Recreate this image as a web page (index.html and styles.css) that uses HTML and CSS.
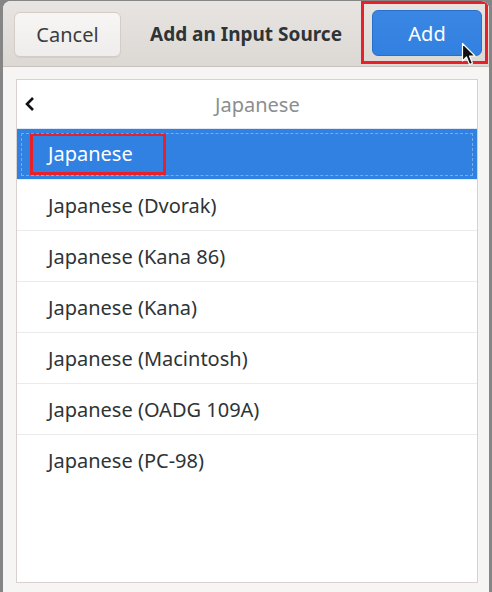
FILE: index.html
```html
<!DOCTYPE html>
<html>
<head>
<meta charset="utf-8">
<link rel="stylesheet" href="styles.css">
</head>
<body>
<div class="window">
  <header class="headerbar">
    <div class="hb-start"><button class="btn cancel">Cancel</button></div>
    <div class="title">Add an Input Source</div>
    <div class="hb-end">
      <div class="mark add-mark"><button class="btn add">Add</button></div>
    </div>
    <svg class="cursor" width="16" height="26" viewBox="0 0 16 26">
      <path d="M1.5 1.5 L1.5 19 L5.5 15 L8.5 22.5 L11.5 21.3 L8.5 14 L14 14 Z" fill="#111" stroke="#fff" stroke-width="1.2" stroke-linejoin="round"/>
    </svg>
  </header>
  <main class="content">
    <div class="list">
      <div class="row back">
        <svg class="chev" width="12" height="16" viewBox="0 0 12 16">
          <path d="M9 2 L3 8 L9 14" fill="none" stroke="#111" stroke-width="2.6" stroke-linecap="butt" stroke-linejoin="miter"/>
        </svg>
        <span class="back-title">Japanese</span>
      </div>
      <div class="row selected"><span class="mark sel-mark">Japanese</span></div>
      <div class="row">Japanese (Dvorak)</div>
      <div class="row">Japanese (Kana 86)</div>
      <div class="row">Japanese (Kana)</div>
      <div class="row">Japanese (Macintosh)</div>
      <div class="row">Japanese (OADG 109A)</div>
      <div class="row">Japanese (PC-98)</div>
    </div>
  </main>
</div>
</body>
</html>
```
FILE: styles.css
```css
* { box-sizing: border-box; }
html, body { margin: 0; padding: 0; }
body {
  width: 492px;
  height: 592px;
  background: #858585;
  font-family: "Noto Sans", "Open Sans", sans-serif;
  color: #2e3436;
  overflow: hidden;
}
.window {
  margin: 1px 3px 0 3px;
  height: 591px;
  background: #f6f5f4;
  border-radius: 8px 8px 0 0;
  display: flex;
  flex-direction: column;
  overflow: hidden;
}
.headerbar {
  position: relative;
  height: 66px;
  flex: none;
  display: grid;
  grid-template-columns: 1fr auto 1fr;
  align-items: center;
  padding: 0 1px;
  background: linear-gradient(to bottom, #e8e4e1, #dcd8d4);
  border-bottom: 1px solid #c9c3bf;
}
.hb-start { justify-self: start; padding-left: 10px; }
.hb-end { justify-self: end; align-self: start; }
.btn {
  font-family: inherit;
  font-size: 20px;
  border-radius: 6px;
  cursor: default;
}
.cancel {
  width: 107px;
  height: 45px;
  margin-top: 1px;
  color: #3a3d3e;
  background: linear-gradient(to bottom, #f7f6f5, #efedeb);
  border: 1px solid #d3ccc7;
  box-shadow: 0 1px 0 rgba(0,0,0,0.05);
}
.title {
  font-size: 19px;
  font-weight: bold;
  color: #2e3436;
}
.mark {
  border: 3px solid #e8202a;
}
.add-mark {
  display: block;
  padding: 6px 3px 5px 8px;
}
.add {
  display: block;
  width: 110px;
  height: 46px;
  color: #fff;
  background: linear-gradient(to bottom, #3a86e4, #3280e0);
  border: 1px solid #2a6fc9;
}
.cursor {
  position: absolute;
  left: 458px;
  top: 41px;
}
.content {
  flex: 1;
  padding: 12px 11px 9px 13px;
}
.list {
  height: 504px;
  background: #fff;
  border: 1px solid #d8d1cf;
}
.row {
  height: 51px;
  display: flex;
  align-items: center;
  padding-left: 31px;
  font-size: 20px;
  color: #2e3436;
  border-bottom: 1px solid #ebebeb;
}
.row:last-child { border-bottom: none; }
.row.back {
  height: 49px;
  position: relative;
  padding-left: 7px;
  border-bottom: 1px solid #dfe8f3;
}
.chev { flex: none; }
.back-title {
  position: absolute;
  left: 198px;
  color: #8b8e8f;
}
.row.selected {
  background: #3081e2;
  color: #fff;
  padding-left: 13px;
  outline: 1px dashed rgba(255,255,255,0.35);
  outline-offset: -5px;
  border-bottom: 1px solid #ebebeb;
}
.sel-mark {
  display: inline-block;
  height: 42px;
  line-height: 36px;
  padding: 0 30px 0 15px;
  margin-top: -1px;
}
```
